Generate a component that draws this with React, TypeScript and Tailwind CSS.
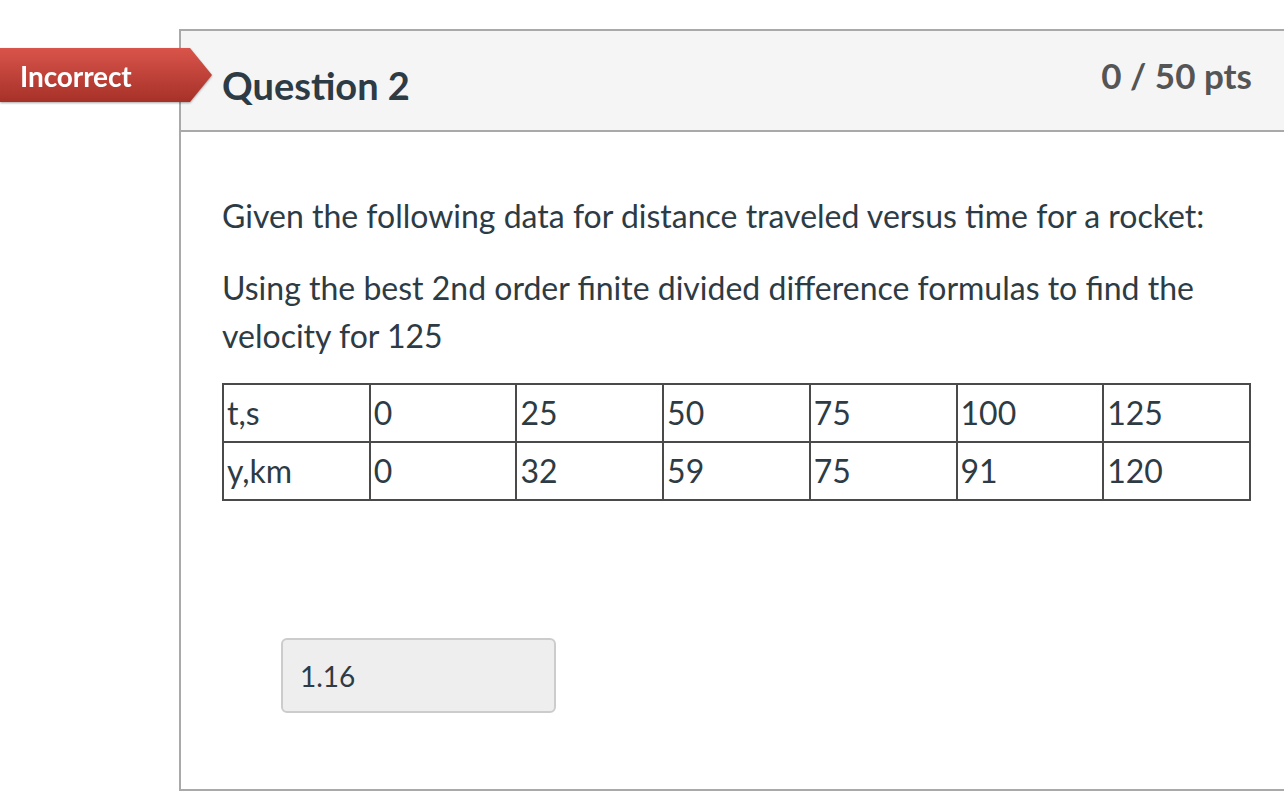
import React from "react";

const rows = [
  ["t,s", "0", "25", "50", "75", "100", "125"],
  ["y,km", "0", "32", "59", "75", "91", "120"]
];

function IncorrectBanner() {
  return (
    <div className="absolute left-0 top-[48px] h-[54px] w-[212px] drop-shadow-[0_1px_1px_rgba(0,0,0,0.35)]">
      <div className="flex h-full items-center bg-gradient-to-b from-[#d9544b] to-[#a63128] pt-[1px] pl-[20px] text-[28px] font-bold tracking-[-0.1px] text-white [clip-path:polygon(0_0,190px_0,212px_50%,190px_100%,0_100%)]">
        Incorrect
      </div>
    </div>
  );
}

export default function App() {
  return (
    <div
      className="relative min-h-[808px] w-full overflow-hidden bg-white text-[#2d3b45]"
      style={{ fontFamily: "Lato, 'Noto Sans', sans-serif" }}
    >
      <div className="pt-[29px]">
        <div className="ml-[179px] w-[1110px] border-2 border-[#a9a9a9]">
          <div className="flex h-[101px] items-start justify-between border-b-2 border-[#a9a9a9] bg-[#f5f5f5] pl-[41px] pr-[35px]">
            <h2 className="mt-[32px] text-[38px] font-bold leading-[44px] text-[#2d3b45]">
              Question 2
            </h2>
            <div className="mt-[24px] text-[35px] font-bold leading-[40px] text-[#555555]">
              0 / 50 pts
            </div>
          </div>

          <div className="pl-[41px] pr-[35px] pt-[60px] pb-[76px]">
            <p className="text-[32px] leading-[48px]">
              Given the following data for distance traveled versus time for a rocket:
            </p>
            <p className="mt-[24px] text-[32px] leading-[48px]">
              Using the best 2nd order finite divided difference formulas to find the velocity for 125
            </p>

            <table className="mt-[23px] w-[1029px] table-fixed border-collapse border-2 border-[#4a4a4a] text-[32px]">
              <tbody>
                {rows.map((row, i) => (
                  <tr key={i} className="h-[58px]">
                    {row.map((cell, j) => (
                      <td
                        key={j}
                        className="border-2 border-[#4a4a4a] pl-[3px] align-middle leading-[36px]"
                      >
                        {cell}
                      </td>
                    ))}
                  </tr>
                ))}
              </tbody>
            </table>

            <div className="ml-[59px] mt-[137px] flex h-[75px] w-[275px] items-center rounded-[6px] border-2 border-[#cccccc] bg-[#eeeeee] pl-[17px] text-[28px]">
              1.16
            </div>
          </div>
        </div>
      </div>
      <IncorrectBanner />
    </div>
  );
}
